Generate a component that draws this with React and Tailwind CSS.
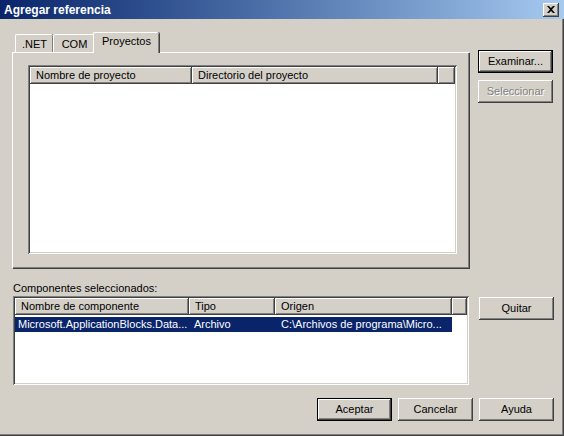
import React from 'react';

const raised =
  'shadow-[inset_-1px_-1px_#404040,inset_1px_1px_#ffffff,inset_-2px_-2px_#808080,inset_2px_2px_#d4d0c8]';
const sunken =
  'shadow-[inset_1px_1px_#808080,inset_-1px_-1px_#ffffff,inset_2px_2px_#404040,inset_-2px_-2px_#d4d0c8]';

const Button = ({ children, isDefault, disabled, className = '' }) => (
  <button
    className={`w-[75px] h-[23px] shrink-0 bg-[#d4d0c8] flex items-center justify-center ${
      isDefault ? 'border border-black' : ''
    } ${raised} ${
      disabled ? 'text-[#808080] [text-shadow:1px_1px_0_#ffffff]' : 'text-black'
    } ${className}`}
  >
    {children}
  </button>
);

const HeaderCell = ({ children, className = '' }) => (
  <div
    className={`h-[17px] flex items-center pl-[6px] whitespace-nowrap overflow-hidden bg-[#d4d0c8] ${raised} ${className}`}
  >
    {children}
  </div>
);

const Tab = ({ children, active, className = '' }) => (
  <div
    className={`flex items-center justify-center rounded-t-[2px] border-l border-t border-white shadow-[inset_-1px_0_#808080,1px_0_#404040] bg-[#d4d0c8] ${
      active ? 'h-[21px] relative z-10 -mb-[1px] -mx-[2px] pb-[3px]' : 'h-[18px] pt-[1px]'
    } ${className}`}
  >
    {children}
  </div>
);

export default function App() {
  return (
    <div className="w-[564px] h-[436px] bg-[#d4d0c8] flex flex-col overflow-hidden text-[11px] text-black font-['Liberation_Sans',Arial,sans-serif]">
      {/* Title bar */}
      <div className="h-[19px] shrink-0 bg-linear-to-r from-[#0a246a] to-[#a6caf0] flex items-center justify-between pl-[4px] pr-[5px]">
        <span className="text-white font-bold text-[12px] leading-none">Agregar referencia</span>
        <div className={`w-[16px] h-[14px] bg-[#d4d0c8] flex items-center justify-center ${raised}`}>
          <svg width="8" height="7" viewBox="0 0 8 7">
            <path d="M0 0h2l2 2 2-2h2L5 3.5 8 7H6L4 5 2 7H0l3-3.5z" fill="#000" />
          </svg>
        </div>
      </div>

      <div className="flex-1 flex flex-col border-r border-b border-[#404040]">
        <div className="flex-1 flex flex-col border-r border-b border-[#808080] pl-[12px] pr-[8px] pt-[13px]">
          {/* Top section */}
          <div className="flex gap-[9px]">
            <div className="w-[457px] flex flex-col">
              <div className="flex items-end h-[20px] pl-[3px]">
                <Tab className="w-[38px]">.NET</Tab>
                <Tab className="w-[42px]">COM</Tab>
                <Tab active className="w-[66px]">Proyectos</Tab>
              </div>
              <div className="h-[216px] border-l border-t border-white shadow-[inset_-1px_-1px_#808080,1px_1px_#404040] pl-[15px] pt-[12px] pr-[12px] pb-[14px]">
                <div className={`h-full bg-white p-[2px] ${sunken}`}>
                  <div className="flex">
                    <HeaderCell className="w-[162px]">Nombre de proyecto</HeaderCell>
                    <HeaderCell className="w-[246px]">Directorio del proyecto</HeaderCell>
                    <HeaderCell className="flex-1" />
                  </div>
                </div>
              </div>
            </div>
            <div className="flex flex-col gap-[7px] pt-[18px]">
              <Button isDefault>Examinar...</Button>
              <Button disabled>Seleccionar</Button>
            </div>
          </div>

          {/* Selected components */}
          <div className="mt-[13px] ml-[1px] h-[15px] leading-[15px]">Componentes seleccionados:</div>
          <div className="flex gap-[10px] ml-[1px]">
            <div className={`w-[456px] h-[89px] bg-white p-[2px] ${sunken}`}>
              <div className="flex">
                <HeaderCell className="w-[174px]">Nombre de componente</HeaderCell>
                <HeaderCell className="w-[86px]">Tipo</HeaderCell>
                <HeaderCell className="w-[177px]">Origen</HeaderCell>
                <HeaderCell className="flex-1" />
              </div>
              <div className="flex mt-[2px] h-[15px] w-[437px] bg-[#0a246a] text-white items-center whitespace-nowrap">
                <span className="w-[174px] pl-[3px] overflow-hidden">Microsoft.ApplicationBlocks.Data...</span>
                <span className="w-[86px] pl-[5px] overflow-hidden">Archivo</span>
                <span className="w-[177px] pl-[6px] overflow-hidden">C:\Archivos de programa\Micro...</span>
              </div>
            </div>
            <div className="pt-[1px]">
              <Button>Quitar</Button>
            </div>
          </div>

          {/* Dialog buttons */}
          <div className="flex justify-end gap-[6px] mt-[13px]">
            <Button isDefault>Aceptar</Button>
            <Button>Cancelar</Button>
            <Button>Ayuda</Button>
          </div>
        </div>
      </div>
    </div>
  );
}
